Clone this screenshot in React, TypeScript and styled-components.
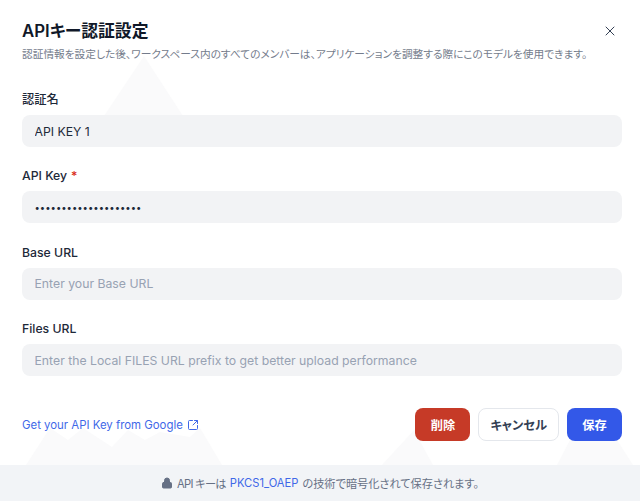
import React, { FC, ReactElement } from 'react';
import styled, { createGlobalStyle } from 'styled-components';
import { X, Lock, SquareArrowOutUpRight } from 'lucide-react';

const GlobalStyle = createGlobalStyle`
    html, body {
        margin: 0;
        padding: 0;
        background: #ffffff;
    }
    body {
        font-family: Inter, "Noto Sans CJK JP", sans-serif;
        font-feature-settings: "palt";
    }
    * {
        box-sizing: border-box;
    }
`

const Dialog = styled.div`
    position: relative;
    width: 640px;
    height: 501px;
    display: flex;
    flex-direction: column;
    background: #ffffff;
    overflow: hidden;
`

const Backdrop = styled.svg`
    position: absolute;
    left: 0;
    top: 0;
    width: 640px;
    height: 501px;
    pointer-events: none;
`

const Body = styled.div`
    position: relative;
    flex: 1;
    display: flex;
    flex-direction: column;
    padding: 20px 18px 0 22px;
`

const Header = styled.div`
    display: flex;
    justify-content: space-between;
    align-items: center;
    height: 22px;
`

const Title = styled.h1`
    margin: 0;
    font-size: 16.8px;
    line-height: 22px;
    font-weight: 600;
    color: #101828;
`

const CloseButton = styled.button`
    display: flex;
    align-items: center;
    justify-content: center;
    width: 24px;
    height: 24px;
    padding: 0;
    border: none;
    background: none;
    color: #344054;
`

const Description = styled.p`
    margin: 4px 0 0;
    font-size: 10.7px;
    line-height: 18px;
    color: #747c8c;
    white-space: nowrap;
`

const Form = styled.form`
    display: flex;
    flex-direction: column;
    gap: 16.4px;
    margin-top: 23px;
    width: 600px;
`

const Field = styled.div`
    display: flex;
    flex-direction: column;
`

const Label = styled.label`
    height: 24px;
    margin-bottom: 4px;
    padding-top: 1px;
    font-size: 12.25px;
    line-height: 24px;
    font-weight: 500;
    color: #1d2939;
`

const Required = styled.span`
    margin-left: 4px;
    color: #d92d20;
`

const Input = styled.input`
    width: 100%;
    height: 32px;
    padding: 0 12.5px;
    border: none;
    border-radius: 8px;
    outline: none;
    background: #f2f3f5;
    font-family: inherit;
    font-size: 12.25px;
    color: #1d2939;

    &::placeholder {
        color: #98a2b3;
    }

    &[type='password'] {
        font-size: 9.5px;
    }
`

const Actions = styled.div`
    display: flex;
    justify-content: space-between;
    align-items: center;
    width: 600px;
    margin-top: 32px;
`

const GuideLink = styled.a`
    display: flex;
    align-items: center;
    gap: 4px;
    font-size: 11.4px;
    color: #3f68e8;
    text-decoration: none;
`

const Buttons = styled.div`
    display: flex;
    gap: 8px;
`

const Button = styled.button<{ $variant: 'danger' | 'plain' | 'primary' }>`
    height: 33px;
    padding: 0 ${p => p.$variant === 'plain' ? '11px' : '15.25px'};
    border-radius: 8px;
    border: ${p => p.$variant === 'plain' ? '1px solid #e4e7ec' : 'none'};
    background: ${p => p.$variant === 'danger' ? '#c63a27' : p.$variant === 'primary' ? '#3358e8' : '#ffffff'};
    color: ${p => p.$variant === 'plain' ? '#344054' : '#ffffff'};
    font-family: inherit;
    font-feature-settings: "palt";
    font-size: 12.25px;
    font-weight: 600;
`

const Footer = styled.div`
    position: relative;
    display: flex;
    justify-content: center;
    align-items: center;
    gap: 4px;
    height: 36px;
    background: #f2f4f7;
    font-size: 11.2px;
    color: #667085;
`

const FooterLead = styled.span`
    letter-spacing: -0.7px;
`

const FooterLink = styled.a`
    color: #3f68e8;
    text-decoration: none;
`

const App: FC = (): ReactElement => {
    return (
        <>
            <GlobalStyle />
            <Dialog>
                <Backdrop viewBox="0 0 640 501">
                    <path d="M26 465 L50 428 L68 440 L83 428 L112 447 L128 430 L145 440 L160 432 L190 437 L200 428 L222 465 Z" fill="#fafafb" />
                    <path d="M104 116 L144 56 L183 116 Z" fill="#fafafb" />
                    <path d="M382 465 L416 428 L417 436 L433 465 Z" fill="#fafafb" />
                    <path d="M557 465 L570 440 L617 440 L633 465 Z" fill="#fafafb" />
                </Backdrop>
                <Body>
                    <Header>
                        <Title>APIキー認証設定</Title>
                        <CloseButton type="button"><X size={16} strokeWidth={1.5} /></CloseButton>
                    </Header>
                    <Description>認証情報を設定した後、ワークスペース内のすべてのメンバーは、アプリケーションを調整する際にこのモデルを使用できます。</Description>
                    <Form>
                        <Field>
                            <Label>認証名</Label>
                            <Input defaultValue="API KEY 1" />
                        </Field>
                        <Field>
                            <Label>API Key<Required>*</Required></Label>
                            <Input type="password" defaultValue="12345678901234567890" />
                        </Field>
                        <Field>
                            <Label>Base URL</Label>
                            <Input placeholder="Enter your Base URL" />
                        </Field>
                        <Field>
                            <Label>Files URL</Label>
                            <Input placeholder="Enter the Local FILES URL prefix to get better upload performance" />
                        </Field>
                    </Form>
                    <Actions>
                        <GuideLink href="#">
                            Get your API Key from Google
                            <SquareArrowOutUpRight size={12} />
                        </GuideLink>
                        <Buttons>
                            <Button $variant="danger" type="button">削除</Button>
                            <Button $variant="plain" type="button">キャンセル</Button>
                            <Button $variant="primary" type="button">保存</Button>
                        </Buttons>
                    </Actions>
                </Body>
                <Footer>
                    <Lock size={12} fill="#667085" />
                    <FooterLead>API キーは</FooterLead>
                    <FooterLink href="#">PKCS1_OAEP</FooterLink>
                    <span>の技術で暗号化されて保存されます。</span>
                </Footer>
            </Dialog>
        </>
    )
}

export default App;
